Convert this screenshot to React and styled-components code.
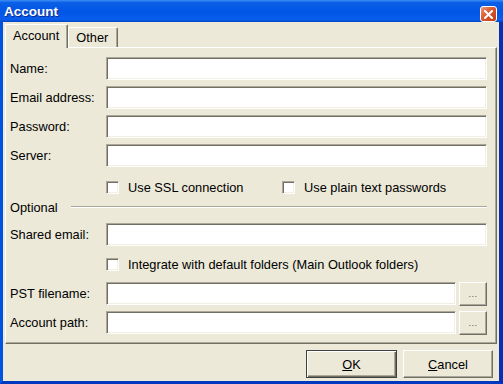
import styled, { createGlobalStyle } from "styled-components";

const GlobalStyle = createGlobalStyle`
  html, body {
    margin: 0;
    padding: 0;
  }
  body {
    font-family: "Liberation Sans", Arial, sans-serif;
    font-size: 12.8px;
    color: #000;
    background: #ece9d8;
  }
`;

const Window = styled.div`
  width: 503px;
  height: 384px;
  display: flex;
  flex-direction: column;
  background: #ece9d8;
  overflow: hidden;
`;

const TitleBar = styled.div`
  height: 22px;
  box-sizing: border-box;
  flex-shrink: 0;
  display: flex;
  align-items: flex-start;
  justify-content: space-between;
  padding: 4px 6px 0 4px;
  background: linear-gradient(
    to bottom,
    #3d8ef7 0%,
    #0b5fe6 12%,
    #0055e5 55%,
    #0a5ded 88%,
    #0046c6 100%
  );
  color: #fff;
  font-weight: bold;
  font-size: 13.5px;
  line-height: 16px;
  text-shadow: 1px 1px 0 #0a2a8a;
`;

const CloseButton = styled.div`
  width: 17px;
  height: 16px;
  margin-top: 2px;
  box-sizing: border-box;
  border: 1px solid #fff;
  border-radius: 3px;
  background: linear-gradient(135deg, #ec9a7c 0%, #d9582e 45%, #c23a14 100%);
  display: flex;
  align-items: center;
  justify-content: center;

  svg {
    display: block;
  }
`;

const Frame = styled.div`
  flex: 1;
  display: flex;
  flex-direction: column;
  border-left: 3px solid #0052e0;
  border-right: 4px solid #0a2fb0;
  border-bottom: 3px solid #0038c0;
  padding: 3px 2px 0 2px;
  min-height: 0;
`;

const TabStrip = styled.div`
  display: flex;
  align-items: flex-end;
  height: 23px;
  margin-bottom: -1px;
  position: relative;
  z-index: 1;
`;

const Tab = styled.div`
  box-sizing: border-box;
  height: ${(p) => (p.$active ? "24px" : "20px")};
  margin-bottom: ${(p) => (p.$active ? "0" : "1px")};
  padding: ${(p) => (p.$active ? "3px 8px 0 7px" : "2px 9px 0 7px")};
  border-top: 1px solid #fff;
  border-left: 1px solid #fff;
  border-right: 1px solid #716f64;
  box-shadow: inset -1px 0 0 #aca899;
  border-radius: 2px 2px 0 0;
  background: #ece9d8;
`;

const Panel = styled.div`
  height: 297px;
  box-sizing: border-box;
  display: flex;
  flex-direction: column;
  padding: 9px 9px 0 4px;
  border-top: 1px solid #fff;
  border-left: 1px solid #fff;
  border-right: 1px solid #716f64;
  border-bottom: 1px solid #716f64;
  box-shadow: inset -1px -1px 0 #aca899;
`;

const Row = styled.div`
  display: flex;
  align-items: center;
  height: ${(p) => p.$h || 23}px;
  margin-top: ${(p) => p.$mt || 0}px;
`;

const Label = styled.div`
  width: 96px;
  flex-shrink: 0;
`;

const TextField = styled.div`
  flex: 1;
  height: 23px;
  box-sizing: border-box;
  background: #fff;
  border: 1px solid;
  border-color: #aca899 #fff #fff #aca899;
  box-shadow: inset 1px 1px 0 #716f64, inset -1px -1px 0 #f1efe2;
`;

const BrowseButton = styled.div`
  width: 28px;
  height: 24px;
  margin-left: 3px;
  box-sizing: border-box;
  border: 1px solid;
  border-color: #fff #716f64 #716f64 #fff;
  box-shadow: inset -1px -1px 0 #aca899;
  display: flex;
  align-items: center;
  justify-content: center;
  font-size: 9px;
  color: #555;
  letter-spacing: 0.5px;
`;

const Indent = styled.div`
  display: flex;
  align-items: center;
  padding-left: 96px;
`;

const CheckItem = styled.label`
  display: flex;
  align-items: center;
  width: ${(p) => (p.$w ? `${p.$w}px` : "auto")};
`;

const Box = styled.span`
  width: 13px;
  height: 13px;
  box-sizing: border-box;
  background: #fff;
  border: 1px solid;
  border-color: #aca899 #fff #fff #aca899;
  box-shadow: inset 1px 1px 0 #716f64, inset -1px -1px 0 #f1efe2;
  margin-right: 9px;
  flex-shrink: 0;
`;

const GroupHeader = styled.div`
  display: flex;
  align-items: center;
  height: 14px;
  margin-top: 3px;
`;

const GroupLine = styled.div`
  flex: 1;
  margin-left: 13px;
  border-top: 1px solid #aca899;
  border-bottom: 1px solid #fff;
`;

const Footer = styled.div`
  display: flex;
  justify-content: flex-end;
  gap: 6px;
  padding: 6px 4px 0 0;
`;

const Button = styled.div`
  width: ${(p) => p.$w}px;
  height: 28px;
  box-sizing: border-box;
  display: flex;
  align-items: center;
  justify-content: center;
  border: 1px solid;
  border-color: ${(p) =>
    p.$default ? "#404040" : "#fff #716f64 #716f64 #fff"};
  box-shadow: ${(p) =>
    p.$default
      ? "inset 1px 1px 0 #fff, inset -1px -1px 0 #716f64, inset -2px -2px 0 #aca899"
      : "inset -1px -1px 0 #aca899"};
  background: #ece9d8;

  u {
    text-decoration: underline;
  }
`;

export default function App() {
  return (
    <>
      <GlobalStyle />
      <Window>
        <TitleBar>
          <span>Account</span>
          <CloseButton>
            <svg width="9" height="9" viewBox="0 0 9 9">
              <path
                d="M1 1 L8 8 M8 1 L1 8"
                stroke="#fff"
                strokeWidth="2"
                strokeLinecap="square"
              />
            </svg>
          </CloseButton>
        </TitleBar>
        <Frame>
          <TabStrip>
            <Tab $active>Account</Tab>
            <Tab>Other</Tab>
          </TabStrip>
          <Panel>
            <Row>
              <Label>Name:</Label>
              <TextField />
            </Row>
            <Row $mt={6}>
              <Label>Email address:</Label>
              <TextField />
            </Row>
            <Row $mt={6}>
              <Label>Password:</Label>
              <TextField />
            </Row>
            <Row $mt={6}>
              <Label>Server:</Label>
              <TextField />
            </Row>
            <Row $h={20} $mt={10}>
              <Indent>
                <CheckItem $w={176}>
                  <Box />
                  Use SSL connection
                </CheckItem>
                <CheckItem>
                  <Box />
                  Use plain text passwords
                </CheckItem>
              </Indent>
            </Row>
            <GroupHeader>
              Optional
              <GroupLine />
            </GroupHeader>
            <Row $mt={9}>
              <Label>Shared email:</Label>
              <TextField />
            </Row>
            <Row $h={20} $mt={8}>
              <Indent>
                <CheckItem>
                  <Box />
                  Integrate with default folders (Main Outlook folders)
                </CheckItem>
              </Indent>
            </Row>
            <Row $mt={8}>
              <Label>PST filename:</Label>
              <TextField />
              <BrowseButton>...</BrowseButton>
            </Row>
            <Row $mt={6}>
              <Label>Account path:</Label>
              <TextField />
              <BrowseButton>...</BrowseButton>
            </Row>
          </Panel>
          <Footer>
            <Button $w={91} $default>
              <span>
                <u>O</u>K
              </span>
            </Button>
            <Button $w={90}>
              <span>
                <u>C</u>ancel
              </span>
            </Button>
          </Footer>
        </Frame>
      </Window>
    </>
  );
}
